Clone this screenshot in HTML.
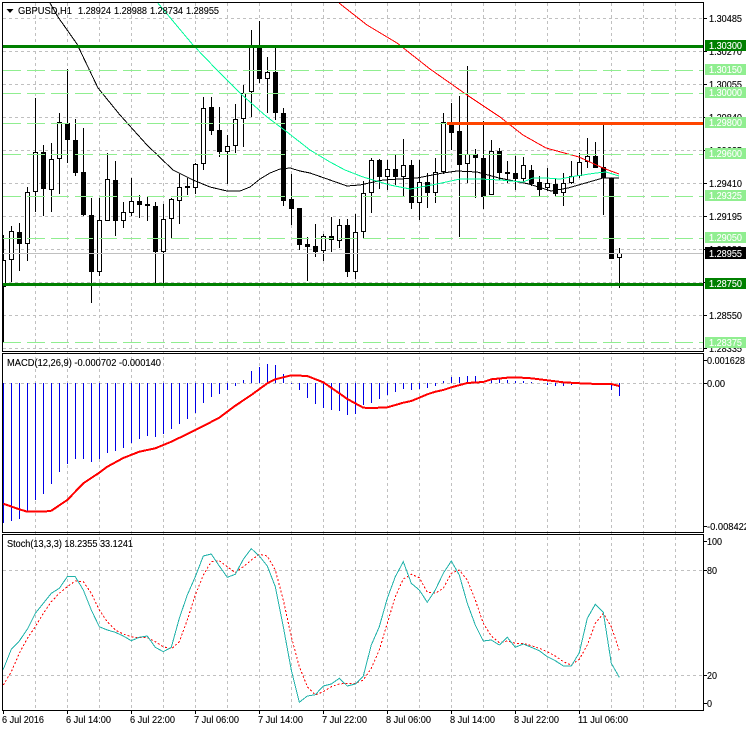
<!DOCTYPE html>
<html><head><meta charset="utf-8"><style>
html,body{margin:0;padding:0;background:#fff;width:746px;height:731px;overflow:hidden}
svg{display:block;position:absolute;left:0;top:0}
text{font-family:"Liberation Sans",sans-serif;font-size:10.5px;fill:#000;stroke:#000;stroke-width:.12}
text.w{fill:#fff;stroke:#fff}
polyline{shape-rendering:crispEdges}
</style></head><body>
<svg width="746" height="731" viewBox="0 0 746 731" xmlns="http://www.w3.org/2000/svg">
<rect width="746" height="731" fill="#fff"/>
<!-- grid -->
<g stroke="#c0c0c0" stroke-dasharray="3 3" fill="none" shape-rendering="crispEdges">
<path d="M35.5 3V710M67.5 3V710M99.5 3V710M131.5 3V710M163.5 3V710M195.5 3V710M227.5 3V710M259.5 3V710M291.5 3V710M323.5 3V710M355.5 3V710M387.5 3V710M419.5 3V710M451.5 3V710M483.5 3V710M515.5 3V710M547.5 3V710M579.5 3V710M611.5 3V710M643.5 3V710M675.5 3V710"/>
<path d="M3 18.5H703M3 51.5H703M3 84.5H703M3 117.5H703M3 150.5H703M3 183.5H703M3 216.5H703M3 249.5H703M3 282.5H703M3 315.5H703M3 348.5H703M3 383.5H703M3 570.5H703M3 675.5H703"/>
</g>
<!-- candles -->
<g shape-rendering="crispEdges">
<path stroke="#000" fill="none" d="M3.5 235V343M11.5 226V282M19.5 223V271M27.5 187V261M35.5 98V212M43.5 145V216M51.5 143V212M59.5 113V194M67.5 69V163M75.5 119V176M83.5 128V216M91.5 198V303M99.5 198V276M107.5 153V221M115.5 161V236M123.5 202V228M131.5 178V216M139.5 195V218M147.5 197V221M155.5 202V286M163.5 204V283M171.5 198V239M179.5 174V224M187.5 178V195M195.5 163V194M203.5 97V170M211.5 97V135M219.5 107V157M227.5 135V184M235.5 104V153M243.5 85V147M251.5 30V117M259.5 21V83M267.5 57V113M275.5 45V120M283.5 108V206M291.5 174V225M299.5 208V250M307.5 237V281M315.5 224V257M323.5 234V261M331.5 217V252M339.5 219V248M347.5 219V277M355.5 214V279M363.5 181V239M371.5 158V213M379.5 159V189M387.5 160V190M395.5 154V185M403.5 139V197M411.5 160V209M419.5 160V220M427.5 173V208M435.5 158V203M443.5 113V174M451.5 103V150M459.5 96V237M467.5 66V183M475.5 149V198M483.5 121V209M491.5 140V195M499.5 148V180M507.5 161V183M515.5 156V190M523.5 157V182M531.5 165V186M539.5 176V197M547.5 168V191M555.5 179V196M563.5 173V206M571.5 161V184M579.5 153V178M587.5 138V168M595.5 142V168M603.5 123V215M611.5 178V259M619.5 248V288"/>
<path fill="#fff" stroke="#000" d="M2.5 260.5h3V286.5h-3zM9.5 231.5h4V259.5h-4zM25.5 192.5h4V243.5h-4zM33.5 152.5h4V191.5h-4zM49.5 159.5h4V189.5h-4zM57.5 122.5h4V158.5h-4zM97.5 220.5h4V271.5h-4zM105.5 179.5h4V220.5h-4zM121.5 212.5h4V220.5h-4zM129.5 201.5h4V212.5h-4zM161.5 219.5h4V251.5h-4zM169.5 199.5h4V218.5h-4zM177.5 187.5h4V200.5h-4zM193.5 164.5h4V187.5h-4zM201.5 108.5h4V163.5h-4zM225.5 146.5h4V151.5h-4zM233.5 119.5h4V145.5h-4zM241.5 93.5h4V118.5h-4zM249.5 46.5h4V91.5h-4zM265.5 72.5h4V78.5h-4zM321.5 236.5h4V250.5h-4zM337.5 225.5h4V240.5h-4zM353.5 232.5h4V271.5h-4zM361.5 193.5h4V231.5h-4zM369.5 160.5h4V192.5h-4zM385.5 169.5h4V176.5h-4zM401.5 165.5h4V176.5h-4zM417.5 182.5h4V202.5h-4zM433.5 172.5h4V192.5h-4zM441.5 122.5h4V171.5h-4zM465.5 154.5h4V163.5h-4zM489.5 151.5h4V194.5h-4zM521.5 165.5h4V178.5h-4zM545.5 183.5h4V187.5h-4zM561.5 183.5h4V192.5h-4zM569.5 176.5h4V182.5h-4zM577.5 162.5h4V175.5h-4zM585.5 156.5h4V161.5h-4zM617.5 253.5h4V257.5h-4z"/>
<path fill="#000" d="M17 232h5V244h-5zM41 152h5V189h-5zM65 123h5V140h-5zM73 140h5V173h-5zM81 172h5V215h-5zM89 215h5V272h-5zM113 180h5V221h-5zM137 201h5V205h-5zM145 204h5V206h-5zM153 206h5V252h-5zM185 186h5V188h-5zM209 107h5V131h-5zM217 130h5V152h-5zM257 46h5V79h-5zM273 72h5V113h-5zM281 113h5V201h-5zM289 199h5V209h-5zM297 208h5V245h-5zM305 244h5V247h-5zM313 246h5V252h-5zM329 236h5V240h-5zM345 225h5V272h-5zM377 160h5V177h-5zM393 169h5V177h-5zM409 165h5V203h-5zM425 182h5V193h-5zM449 122h5V133h-5zM457 131h5V165h-5zM473 154h5V158h-5zM481 158h5V197h-5zM497 151h5V173h-5zM505 172h5V174h-5zM513 173h5V179h-5zM529 170h5V184h-5zM537 182h5V190h-5zM553 184h5V194h-5zM593 156h5V168h-5zM601 167h5V178h-5zM609 178h5V259h-5z"/>
</g>
<!-- moving averages -->
<g fill="none" stroke-width="1">
<polyline stroke="#000" points="50,3 58,17 77,44 98,88 120,115 147,145 173,170 193,180 210,187 227,191 240,191 250,187 260,179 270,173 280,169 290,168 300,171 310,173 330,180 347,186 360,185 383,180 400,179 417,178 443,173 457,171 477,172 499,178 529,184 551,191 568,188 603,178 619,178"/>
<polyline stroke="#00fa9a" points="157,2 193,45 217,70 240,93 250,102 267,117 287,132 310,150 330,162 345,170 363,177 390,185 410,189 437,184 460,179 480,179 500,180 523,182 533,178 546,178 560,179 576,176 596,173 606,172 619,176"/>
<polyline stroke="#ff0000" points="339,3 367,25 397,43 430,69 467,95 500,117 523,135 546,148 579,157 603,168 619,174"/>
</g>
<!-- level lines -->
<g fill="none" shape-rendering="crispEdges">
<g stroke="#90ee90" stroke-dasharray="18 6">
<path d="M3 70.5H703M3 93.5H703M3 123.5H447M3 154.5H703M3 196.5H703M3 238.5H703M3 342.5H703"/>
</g>
<path stroke="#c0c0c0" d="M3 253.5H703"/>
<path stroke="#ff4500" stroke-width="3" d="M447 123.5H703"/>
<path stroke="#008000" stroke-width="3" d="M3 46.5H703M3 284.5H703"/>
</g>
<!-- MACD histogram -->
<path shape-rendering="crispEdges" fill="none" stroke="#0000e6" d="M3.5 383V523M11.5 383V521M19.5 383V519M27.5 383V512M35.5 383V500M43.5 383V494M51.5 383V484M59.5 383V472M67.5 383V464M75.5 383V459M83.5 383V459M91.5 383V462M99.5 383V459M107.5 383V453M115.5 383V451M123.5 383V448M131.5 383V443M139.5 383V439M147.5 383V436M155.5 383V437M163.5 383V434M171.5 383V429M179.5 383V424M187.5 383V419M195.5 383V413M203.5 383V403M211.5 383V397M219.5 383V394M227.5 383V390M235.5 383V386M243.5 383V380M251.5 383V371M259.5 383V367M267.5 383V364M275.5 383V365M283.5 383V374M291.5 383V384M299.5 383V390M307.5 383V398M315.5 383V404M323.5 383V408M331.5 383V410M339.5 383V411M347.5 383V415M355.5 383V414M363.5 383V405M371.5 383V403M379.5 383V399M387.5 383V395M395.5 383V392M403.5 383V389M411.5 383V390M419.5 383V389M427.5 383V388M435.5 383V386M443.5 383V381M451.5 383V377M459.5 383V377M467.5 383V376M475.5 383V376M483.5 383V382M491.5 383V380M499.5 383V379M507.5 383V380M515.5 383V381M523.5 383V381M531.5 383V382M547.5 383V385M555.5 383V386M563.5 383V386M571.5 383V385M579.5 383V384M587.5 383V383M595.5 383V383M603.5 383V384M611.5 383V390M619.5 383V396"/>
<polyline fill="none" stroke="#ff0000" stroke-width="2" points="3.3,503.7 19.3,509.3 27.3,511.7 43.3,511.7 51.3,510.7 67.3,500 83.3,483.3 99.3,472.7 107.3,466.7 123.3,458 139.3,451.7 155.3,448.3 171.3,441.7 187.3,434 203.3,426 219.3,417.7 235.3,405.7 251.3,395 267.3,383.3 275.3,379.3 291.3,375.3 307.3,376 323.3,382.3 339.3,393.3 347.3,399 363.3,407.7 373,408 387.3,407.3 403.3,402.7 411.3,401 419.3,397.7 427.3,394.3 435.3,391.7 443.3,390 451.3,387.3 467.3,383 483.3,382 491.3,379.3 507.3,377.7 515.3,377.3 531.3,378.3 547.3,380.3 555.3,381.3 563.3,382.3 587.3,383.7 611.3,384 619.3,386"/>
<!-- Stochastic -->
<polyline fill="none" stroke="#ff0000" stroke-dasharray="2 2" points="3.3,685 11.3,671.7 19.3,653.3 27.3,638.3 35.3,626.7 43.3,613.3 51.3,601.7 59.3,593.3 67.3,586.7 75.3,581 83.3,581.7 91.3,593.3 99.3,610 107.3,621.7 115.3,630 123.3,634 131.3,636.7 139.3,637.7 147.3,637.7 155.3,641.7 163.3,646.7 171.3,649 179.3,641.7 187.3,620 195.3,595 203.3,575 211.3,561.7 219.3,560.7 227.3,566.7 235.3,572.7 243.3,566.7 251.3,560 259.3,554.3 267.3,556 275.3,570 283.3,600 291.3,636.7 299.3,666.7 307.3,686.7 315.3,695 323.3,691.7 331.3,686.7 339.3,684 347.3,683.3 355.3,683.3 363.3,680 371.3,668.3 379.3,650 387.3,623.3 395.3,596.7 403.3,579 411.3,574.3 419.3,577.7 427.3,592.3 435.3,593.3 443.3,588.3 451.3,573.3 459.3,570 467.3,580 475.3,600 483.3,623.3 491.3,636 499.3,642.7 507.3,641 515.3,643.3 523.3,643.3 531.3,645.7 539.3,648.3 547.3,651.7 555.3,656 563.3,661.7 571.3,665 579.3,659.3 587.3,645 595.3,623.3 603.3,613.3 611.3,626.7 619.3,650.7"/>
<polyline fill="none" stroke="#20b2aa" points="3.3,669.3 11.3,649.3 19.3,641 27.3,629.3 35.3,613.3 43.3,603.3 51.3,593.3 59.3,588.3 67.3,576.7 75.3,576.7 83.3,590 91.3,610 99.3,626.7 107.3,630 115.3,632.3 123.3,636 131.3,640.7 139.3,637.3 147.3,636 155.3,647.3 163.3,651.7 171.3,647.3 179.3,618.3 187.3,595 195.3,576.7 203.3,556 211.3,554 219.3,566 227.3,577.3 235.3,574.3 243.3,559.3 251.3,548.7 259.3,556 267.3,566 275.3,586.7 283.3,626.7 291.3,670 299.3,702.3 307.3,696 315.3,694.7 323.3,686 331.3,684 339.3,678.3 347.3,686 355.3,684 363.3,676 371.3,645 379.3,626.7 387.3,598.3 395.3,576.7 403.3,561.7 411.3,583.3 419.3,590 427.3,602.3 435.3,590 443.3,573.3 451.3,561 459.3,575 467.3,603.3 475.3,625 483.3,641 491.3,640 499.3,645 507.3,637.3 515.3,647.3 523.3,644 531.3,647.3 539.3,650.7 547.3,656.7 555.3,660.7 563.3,666 571.3,666 579.3,652.7 587.3,618.3 595.3,604.3 603.3,612.3 611.3,663.3 619.3,677.3"/>
<!-- frames -->
<g fill="none" stroke="#000" shape-rendering="crispEdges">
<path d="M2.5 2.5H703.5V351.5H2.5ZM2.5 353.5H703.5V532.5H2.5ZM2.5 534.5H703.5V710.5H2.5Z"/>
<path d="M703 18.5H707M703 51.5H707M703 84.5H707M703 117.5H707M703 150.5H707M703 183.5H707M703 216.5H707M703 249.5H707M703 282.5H707M703 315.5H707M703 348.5H707M703 360.5H707M703 383.5H707M703 526.5H707M703 541.5H707M703 570.5H707M703 675.5H707M703 703.5H707"/>
<path d="M3.5 710V714M67.5 710V714M131.5 710V714M195.5 710V714M259.5 710V714M323.5 710V714M387.5 710V714M451.5 710V714M515.5 710V714M579.5 710V714"/>
</g>
<!-- axis text -->
<g>
<text x="709" y="22" textLength="33" lengthAdjust="spacingAndGlyphs">1.30485</text>
<text x="709" y="55" textLength="33" lengthAdjust="spacingAndGlyphs">1.30270</text>
<text x="709" y="88" textLength="33" lengthAdjust="spacingAndGlyphs">1.30055</text>
<text x="709" y="121" textLength="33" lengthAdjust="spacingAndGlyphs">1.29840</text>
<text x="709" y="154" textLength="33" lengthAdjust="spacingAndGlyphs">1.29625</text>
<text x="709" y="187" textLength="33" lengthAdjust="spacingAndGlyphs">1.29410</text>
<text x="709" y="220" textLength="33" lengthAdjust="spacingAndGlyphs">1.29195</text>
<text x="709" y="253" textLength="33" lengthAdjust="spacingAndGlyphs">1.28980</text>
<text x="709" y="286" textLength="33" lengthAdjust="spacingAndGlyphs">1.28765</text>
<text x="709" y="319" textLength="33" lengthAdjust="spacingAndGlyphs">1.28550</text>
<text x="709" y="352" textLength="33" lengthAdjust="spacingAndGlyphs">1.28335</text>
<text x="707" y="364" textLength="38" lengthAdjust="spacingAndGlyphs">0.001628</text>
<text x="707" y="387" textLength="18" lengthAdjust="spacingAndGlyphs">0.00</text>
<text x="707" y="530" textLength="42" lengthAdjust="spacingAndGlyphs">-0.008422</text>
<text x="707" y="545" textLength="15" lengthAdjust="spacingAndGlyphs">100</text>
<text x="707" y="574" textLength="10" lengthAdjust="spacingAndGlyphs">80</text>
<text x="707" y="679" textLength="10" lengthAdjust="spacingAndGlyphs">20</text>
<text x="707" y="707" textLength="5" lengthAdjust="spacingAndGlyphs">0</text>
</g>
<!-- price labels -->
<g shape-rendering="crispEdges">
<rect x="705" y="40" width="41" height="11" fill="#008000"/>
<rect x="705" y="64" width="41" height="11" fill="#90ee90"/>
<rect x="705" y="87" width="41" height="11" fill="#90ee90"/>
<rect x="705" y="117" width="41" height="11" fill="#90ee90"/>
<rect x="705" y="148" width="41" height="11" fill="#90ee90"/>
<rect x="705" y="190" width="41" height="11" fill="#90ee90"/>
<rect x="705" y="232" width="41" height="11" fill="#90ee90"/>
<rect x="705" y="247" width="41" height="12" fill="#000"/>
<rect x="705" y="278" width="41" height="11" fill="#008000"/>
<rect x="705" y="337" width="41" height="11" fill="#90ee90"/>
</g>
<text class="w" x="709" y="49" textLength="33" lengthAdjust="spacingAndGlyphs">1.30300</text>
<text class="w" x="709" y="73" textLength="33" lengthAdjust="spacingAndGlyphs">1.30150</text>
<text class="w" x="709" y="96" textLength="33" lengthAdjust="spacingAndGlyphs">1.30000</text>
<text class="w" x="709" y="126" textLength="33" lengthAdjust="spacingAndGlyphs">1.29800</text>
<text class="w" x="709" y="157" textLength="33" lengthAdjust="spacingAndGlyphs">1.29600</text>
<text class="w" x="709" y="199" textLength="33" lengthAdjust="spacingAndGlyphs">1.29325</text>
<text class="w" x="709" y="241" textLength="33" lengthAdjust="spacingAndGlyphs">1.29050</text>
<text class="w" x="709" y="257" textLength="33" lengthAdjust="spacingAndGlyphs">1.28955</text>
<text class="w" x="709" y="287" textLength="33" lengthAdjust="spacingAndGlyphs">1.28750</text>
<text class="w" x="709" y="346" textLength="33" lengthAdjust="spacingAndGlyphs">1.28375</text>
<!-- titles -->
<path d="M6.5 9h7l-3.5 4z" fill="#000"/>
<text x="18" y="14" textLength="54" lengthAdjust="spacingAndGlyphs">GBPUSD,H1</text>
<text x="78" y="14" textLength="33" lengthAdjust="spacingAndGlyphs">1.28924</text>
<text x="114" y="14" textLength="33" lengthAdjust="spacingAndGlyphs">1.28988</text>
<text x="150" y="14" textLength="33" lengthAdjust="spacingAndGlyphs">1.28734</text>
<text x="186" y="14" textLength="33" lengthAdjust="spacingAndGlyphs">1.28955</text>
<text x="7" y="366" textLength="154" lengthAdjust="spacingAndGlyphs">MACD(12,26,9) -0.000702 -0.000140</text>
<text x="7" y="547" textLength="126" lengthAdjust="spacingAndGlyphs">Stoch(13,3,3) 18.2355 33.1241</text>
<!-- time axis -->
<text x="2" y="723" textLength="42" lengthAdjust="spacingAndGlyphs">6 Jul 2016</text>
<text x="66" y="723" textLength="45" lengthAdjust="spacingAndGlyphs">6 Jul 14:00</text>
<text x="130" y="723" textLength="45" lengthAdjust="spacingAndGlyphs">6 Jul 22:00</text>
<text x="194" y="723" textLength="45" lengthAdjust="spacingAndGlyphs">7 Jul 06:00</text>
<text x="258" y="723" textLength="45" lengthAdjust="spacingAndGlyphs">7 Jul 14:00</text>
<text x="322" y="723" textLength="45" lengthAdjust="spacingAndGlyphs">7 Jul 22:00</text>
<text x="386" y="723" textLength="45" lengthAdjust="spacingAndGlyphs">8 Jul 06:00</text>
<text x="450" y="723" textLength="45" lengthAdjust="spacingAndGlyphs">8 Jul 14:00</text>
<text x="514" y="723" textLength="45" lengthAdjust="spacingAndGlyphs">8 Jul 22:00</text>
<text x="578" y="723" textLength="50" lengthAdjust="spacingAndGlyphs">11 Jul 06:00</text>
</svg>
</body></html>
